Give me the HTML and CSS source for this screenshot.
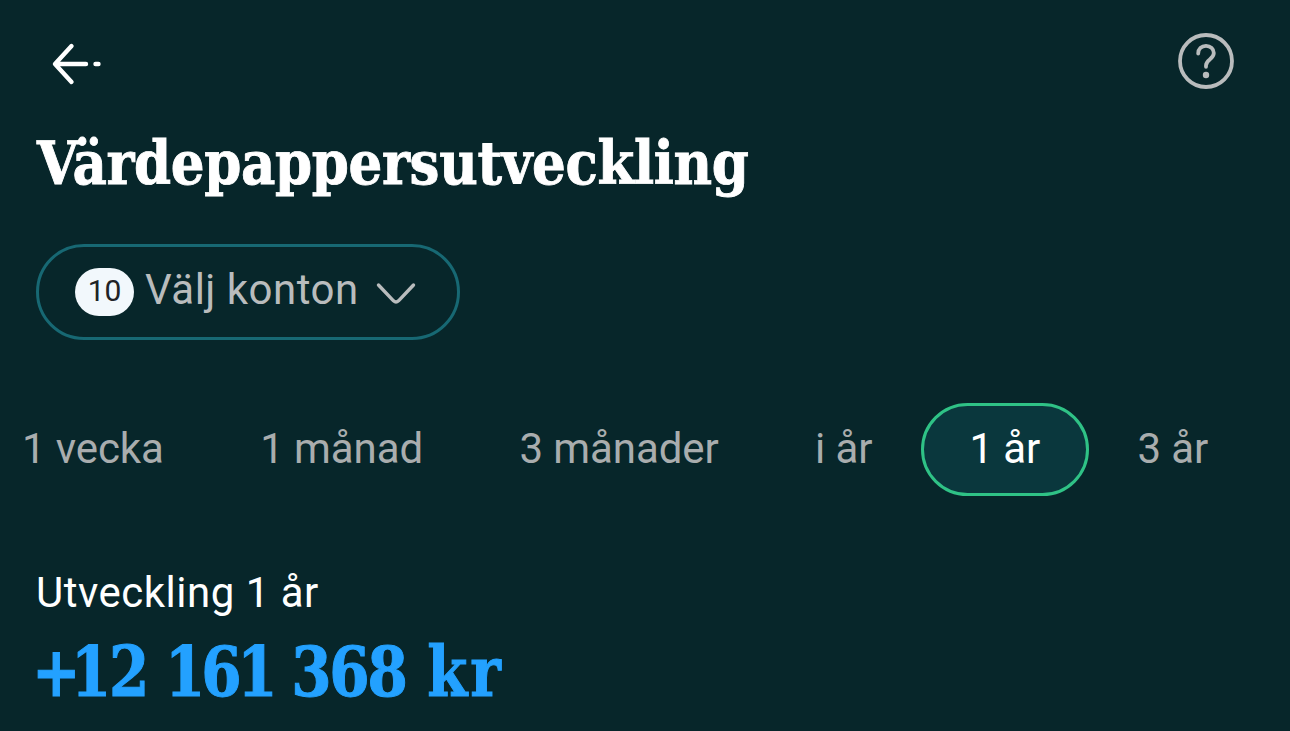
FILE: index.html
```html
<!DOCTYPE html>
<html lang="sv">
<head>
    <meta charset="UTF-8">
    <meta name="viewport" content="width=device-width, initial-scale=1.0">
    <title>Värdepappersutveckling</title>
    <link rel="stylesheet" href="styles.css">
</head>
<body>

<header class="top-bar">
    <button class="icon-btn" aria-label="Tillbaka">
        <svg class="back-icon" width="52" height="44" viewBox="0 0 52 44">
            <path d="M21.500 4L5 22L21.500 40M5.500 22H36M45.500 22H48.500"/>
        </svg>
    </button>
    <button class="icon-btn" aria-label="Hjälp">
        <svg class="help-icon" width="56" height="56" viewBox="0 0 56 56">
            <circle cx="28" cy="28" r="26"/>
            <path d="M20.200 20.500C20.200 15.800 23.500 12.800 28 12.800C32.500 12.800 35.800 16 35.800 20C35.800 26.500 28 26.500 28 32.500V33.800"/>
            <circle class="dot" cx="28" cy="42" r="3.200"/>
        </svg>
    </button>
</header>

<main>
    <h1>Värdepappersutveckling</h1>

    <button class="account-btn">
        <span class="badge">10</span>
        <span class="label">Välj konton</span>
        <svg class="chevron" width="40" height="24" viewBox="0 0 40 24">
            <path d="M2.500 3L17.500 18.800Q20 21 22.500 18.800L37.500 3"/>
        </svg>
    </button>

    <nav class="tabs">
        <button class="tab">1 vecka</button>
        <button class="tab">1 månad</button>
        <button class="tab">3 månader</button>
        <button class="tab">i år</button>
        <button class="tab active">1 år</button>
        <button class="tab">3 år</button>
    </nav>

    <section class="result">
        <p class="result-label">Utveckling 1 år</p>
        <p class="amount"><span class="sign">+</span>12 <span class="thousands">161</span> 368 <span class="currency">kr</span></p>
    </section>
</main>

</body>
</html>
```
FILE: styles.css
```css
:root {
    --bg: #07262a;
    --muted: #b9bcbd;
    --teal: #176873;
    --green: #2fc286;
    --blue: #23a1ff;
}
* { box-sizing: border-box; }
body {
    margin: 0;
    height: 731px;
    background: var(--bg);
    color: white;
    font-family: Roboto, sans-serif;
    font-size: 42px;
    overflow: hidden;
}
button { background: none; border: none; padding: 0; margin: 0; color: inherit; font: inherit; }
h1, p { margin: 0; font-weight: normal; }
svg { display: block; fill: none; stroke-linecap: round; stroke-linejoin: round; }

/* Top bar */
.top-bar { display: flex; justify-content: space-between; align-items: flex-start; padding: 33px 56px 0 50px; height: 124px; }
.icon-btn { font-size: 0; line-height: 0; }
.back-icon { stroke: white; stroke-width: 4.4; margin-top: 9px; }
.help-icon { stroke: var(--muted); stroke-width: 3.8; }
.help-icon .dot { fill: var(--muted); stroke: none; }

h1 {
    font-family: "Roboto Slab", "DejaVu Serif Condensed", "DejaVu Serif", serif;
    font-stretch: condensed;
    font-size: 59px;
    font-weight: bold;
    line-height: 80px;
    letter-spacing: -0.35px;
    padding-left: 37px;
    white-space: nowrap;
    -webkit-text-stroke: 0.8px white;
}

/* Account picker */
.account-btn {
    display: flex;
    align-items: center;
    width: 424px;
    height: 96px;
    margin: 40px 0 0 36px;
    padding-left: 36px;
    border: 3px solid var(--teal);
    border-radius: 48px;
    color: var(--muted);
}
.badge {
    width: 59px;
    height: 48px;
    border-radius: 24px;
    background: #f2f8fc;
    color: #202326;
    font-size: 30px;
    line-height: 46px;
    text-align: center;
}
.label { margin-left: 11px; padding-bottom: 5px; letter-spacing: 0.5px; white-space: nowrap; }
.chevron { margin-left: 17px; margin-top: 4px; stroke: var(--muted); stroke-width: 3.4; }

/* Period tabs */
.tabs { display: flex; gap: 0.5px; margin: 63px 0 0 -26px; }
.tab {
    flex: none;
    height: 93px;
    padding: 0 45px 3px;
    border: 3px solid transparent;
    border-radius: 46.5px;
    color: #a9adae;
    letter-spacing: -0.1px;
    white-space: nowrap;
}
.tab.active { width: 168px; background: #0a373d; border-color: var(--green); color: white; }

/* Result */
.result { padding: 68px 0 0 36px; }
.result-label { line-height: 58px; letter-spacing: 0.5px; }
.amount {
    font-family: "Roboto Slab", "DejaVu Serif Condensed", "DejaVu Serif", serif;
    font-stretch: condensed;
    font-size: 70px;
    font-weight: bold;
    line-height: 100px;
    letter-spacing: -2.4px;
    margin-left: -4px;
    color: var(--blue);
    white-space: nowrap;
    transform: scaleX(0.92);
    transform-origin: left;
    -webkit-text-stroke: 1px var(--blue);
}
.sign { letter-spacing: -10.5px; }
.thousands { letter-spacing: -4.6px; }
.currency { margin-left: 4px; letter-spacing: 3px; }
```
